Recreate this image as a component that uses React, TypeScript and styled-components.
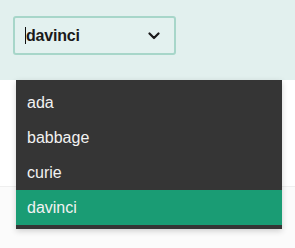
import React from 'react';
import styled, { createGlobalStyle } from 'styled-components';

const GlobalStyle = createGlobalStyle`
  html, body {
    margin: 0;
    padding: 0;
    background: #ffffff;
    font-family: "Liberation Sans", Arial, sans-serif;
  }
`;

const options = ['ada', 'babbage', 'curie', 'davinci'];

//page shell
const Page = styled.div`
  position: relative;
  width: 295px;
  height: 248px;
  overflow: hidden;
  background: #ffffff;
`;

const Header = styled.div`
  height: 80px;
  background: #e2f0ee;
  padding: 16px 0 0 13px;
  box-sizing: border-box;
`;

const Body = styled.div`
  height: 106px;
  background: #ffffff;
  border-bottom: 1px solid #efefef;
`;

const Footer = styled.div`
  height: 62px;
  background: #fbfbfb;
`;

//select trigger
const Trigger = styled.div`
  width: 163px;
  height: 39px;
  box-sizing: border-box;
  border: 2px solid #a7d6c9;
  border-radius: 3px;
  background: #e3f1ef;
  display: flex;
  align-items: center;
  justify-content: space-between;
  padding: 0 14px 0 10px;
`;

const Value = styled.span`
  display: flex;
  align-items: center;
  font-size: 16px;
  font-weight: 700;
  letter-spacing: -0.2px;
  color: #1a1a1a;
`;

const Caret = styled.span`
  width: 1px;
  height: 17px;
  background: #111;
`;

//options list
const Menu = styled.ul`
  position: absolute;
  left: 16px;
  top: 80px;
  width: 266px;
  margin: 0;
  padding: 5px 0 4px;
  list-style: none;
  background: #353535;
  box-shadow: 0 2px 6px rgba(0, 0, 0, 0.18);
`;

const Item = styled.li<{ $active?: boolean }>`
  height: 35px;
  display: flex;
  align-items: center;
  padding-left: 11px;
  font-size: 16px;
  color: #f2f2f2;
  background: ${(p) => (p.$active ? '#1a9c74' : 'transparent')};
`;

function Chevron() {
  return (
    <svg width="12" height="8" viewBox="0 0 12 8">
      <path d="M1.5 1.5 L6 6 L10.5 1.5" fill="none" stroke="#1a1a1a" strokeWidth="2.2" strokeLinecap="round" strokeLinejoin="round" />
    </svg>
  );
}

export default function App() {
  const selected = 'davinci';
  return (
    <Page>
      <GlobalStyle />
      <Header>
        <Trigger>
          <Value>
            <Caret />
            {selected}
          </Value>
          <Chevron />
        </Trigger>
      </Header>
      <Body />
      <Footer />
      <Menu>
        {options.map((o) => (
          <Item key={o} $active={o === selected}>
            {o}
          </Item>
        ))}
      </Menu>
    </Page>
  );
}
